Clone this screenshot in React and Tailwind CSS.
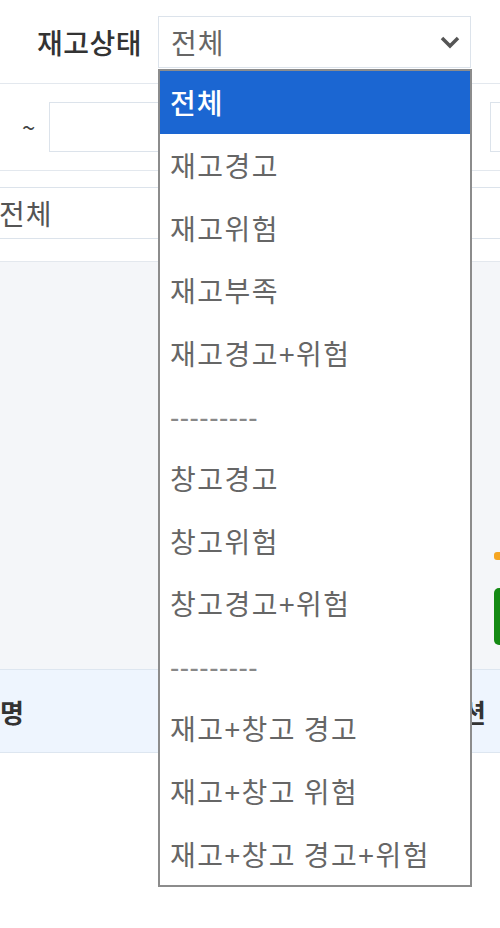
import React from 'react';

const options = [
  '전체',
  '재고경고',
  '재고위험',
  '재고부족',
  '재고경고+위험',
  '---------',
  '창고경고',
  '창고위험',
  '창고경고+위험',
  '---------',
  '재고+창고 경고',
  '재고+창고 위험',
  '재고+창고 경고+위험',
];

const font = { fontFamily: '"Noto Sans CJK KR", "Noto Sans", sans-serif' };

export default function App() {
  return (
    <div className="relative w-[500px] h-[928px] overflow-hidden bg-white" style={font}>
      {/* status filter row */}
      <div className="h-[84px] flex items-center border-b border-[#e3e8ee]">
        <span className="ml-[37px] w-[121px] text-[28px] font-medium text-[#333] tracking-[0.5px]">재고상태</span>
        <div className="w-[313px] h-[52px] border border-[#dce3eb] flex items-center justify-between px-[12px]">
          <span className="text-[28px] text-[#666] tracking-[1px]">전체</span>
          <svg width="22" height="14" viewBox="0 0 22 14" className="mr-[-3px]">
            <polyline points="3,3 11,11 19,3" fill="none" stroke="#555" strokeWidth="3.5" />
          </svg>
        </div>
      </div>

      {/* date row */}
      <div className="h-[87px] flex items-center border-b border-[#e3e8ee]">
        <span className="ml-[22px] text-[24px] text-[#444] w-[27px]">~</span>
        <div className="w-[200px] h-[50px] border border-[#dce3eb]" />
        <div className="ml-auto mr-[-20px] w-[30px] h-[50px] border border-[#dce3eb]" />
      </div>

      {/* select row */}
      <div className="h-[91px] pt-[16px] flex gap-[8px] border-b border-[#e3e8ee] ml-[-12px] mr-[-30px]">
        <div className="flex-1 h-[52px] border border-[#dce3eb] flex items-center px-[10px]">
          <span className="text-[28px] text-[#555] tracking-[1px]">전체</span>
        </div>
        <div className="w-[100px] h-[52px] border border-[#dce3eb] flex items-center">
          <span className="ml-[-18px] text-[28px] text-[#555] tracking-[1px]">전체</span>
        </div>
      </div>

      {/* gray summary area */}
      <div className="h-[407px] bg-[#f4f6f9] flex flex-col items-end pt-[290px]">
        <div className="w-[6px] h-[8px] bg-[#f5a623] rounded-l-[3px]" />
        <div className="mt-[28px] w-[6px] h-[57px] bg-[#148a14] rounded-l-[5px]" />
      </div>

      {/* table header */}
      <div className="h-[84px] bg-[#eef5fe] border-y border-[#dde6f0] flex items-center justify-between">
        <span className="ml-0 text-[26px] font-bold text-[#333]">명</span>
        <span className="mr-[14px] text-[26px] font-bold text-[#333]">션</span>
      </div>

      {/* open dropdown list */}
      <div className="absolute left-[158px] top-[69px] w-[314px] h-[818px] bg-white border-2 border-[#8c8c8c] flex flex-col">
        {options.map((opt, i) => (
          <div
            key={i}
            className={
              i === 0
                ? 'h-[62.7px] flex items-center px-[10px] bg-[#1b66d2] text-white text-[28px] font-medium tracking-[1px]'
                : opt.startsWith('-')
                ? 'h-[62.7px] flex items-center px-[10px] text-[#888] text-[26px] font-medium tracking-[0.5px]'
                : 'h-[62.7px] flex items-center px-[10px] text-[#666] text-[28px] tracking-[1.5px]'
            }
          >
            {opt}
          </div>
        ))}
      </div>
    </div>
  );
}
